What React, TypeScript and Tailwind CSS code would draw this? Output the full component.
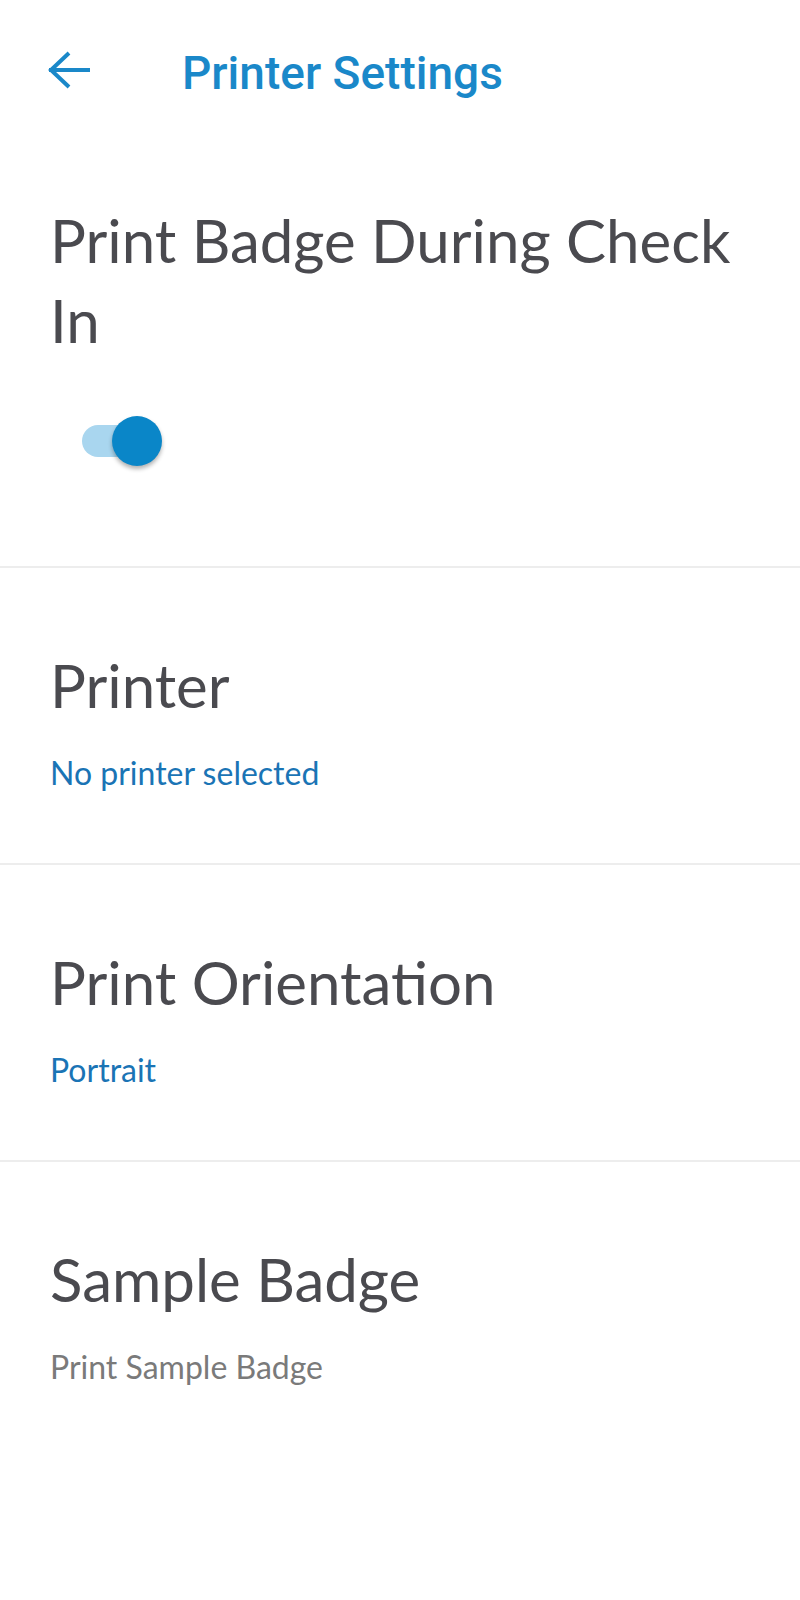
import { useState } from 'react';

function Section({ title, value, valueClass }: { title: string; value: string; valueClass: string }) {
  return (
    <div className="border-t-2 border-[#ededed] px-[50px] pt-[77px] pb-[70px]">
      <div className="text-[60px] leading-[80px] text-[#4a4a4f]">{title}</div>
      <div className={`mt-[28px] text-[32px] leading-[40px] ${valueClass}`}>{value}</div>
    </div>
  );
}

export default function App() {
  const [on, setOn] = useState(true);

  return (
    <div className="min-h-[1600px] bg-white" style={{ fontFamily: 'Lato, "Noto Sans", sans-serif' }}>
      {/* Header */}
      <header className="flex items-start pl-[48px] pt-[48px]">
        <button className="w-[42px] h-[40px] mt-[2px]">
          <svg width="42" height="40" viewBox="0 0 42 40" fill="none" stroke="#1a88c9" strokeWidth="4" strokeLinecap="square">
            <path d="M3 20 H40" />
            <path d="M21 3 L3 20 L21 37" strokeLinecap="butt" />
          </svg>
        </button>
        <h1
          className="ml-[92px] mt-[5px] text-[46px] leading-[40px] font-medium text-[#1a88c9]"
          style={{ fontFamily: 'Roboto, sans-serif' }}
        >
          Printer Settings
        </h1>
      </header>

      {/* Print badge toggle */}
      <div className="px-[50px] pt-[107px] pb-[100px]">
        <div className="text-[60px] leading-[80px] text-[#4a4a4f]">Print Badge During Check In</div>
        <button onClick={() => setOn(!on)} className="relative mt-[56px] ml-[32px] flex items-center w-[80px] h-[50px]">
          <span className={`block w-[78px] h-[32px] rounded-full ${on ? 'bg-[#a9d6ef]' : 'bg-[#d0d0d0]'}`} />
          <span
            className={`absolute top-0 ${on ? 'left-[30px] bg-[#0a86c8]' : 'left-0 bg-[#f5f5f5]'} w-[50px] h-[50px] rounded-full shadow-[0_3px_4px_rgba(0,0,0,0.3)]`}
          />
        </button>
      </div>

      <Section title="Printer" value="No printer selected" valueClass="text-[#1a74b5]" />
      <Section title="Print Orientation" value="Portrait" valueClass="text-[#1a74b5]" />
      <div className="border-t-2 border-[#ededed] px-[50px] pt-[77px]">
        <div className="text-[60px] leading-[80px] text-[#4a4a4f]">Sample Badge</div>
        <div className="mt-[28px] text-[32px] leading-[40px] text-[#7a7a7a]">Print Sample Badge</div>
      </div>
    </div>
  );
}
